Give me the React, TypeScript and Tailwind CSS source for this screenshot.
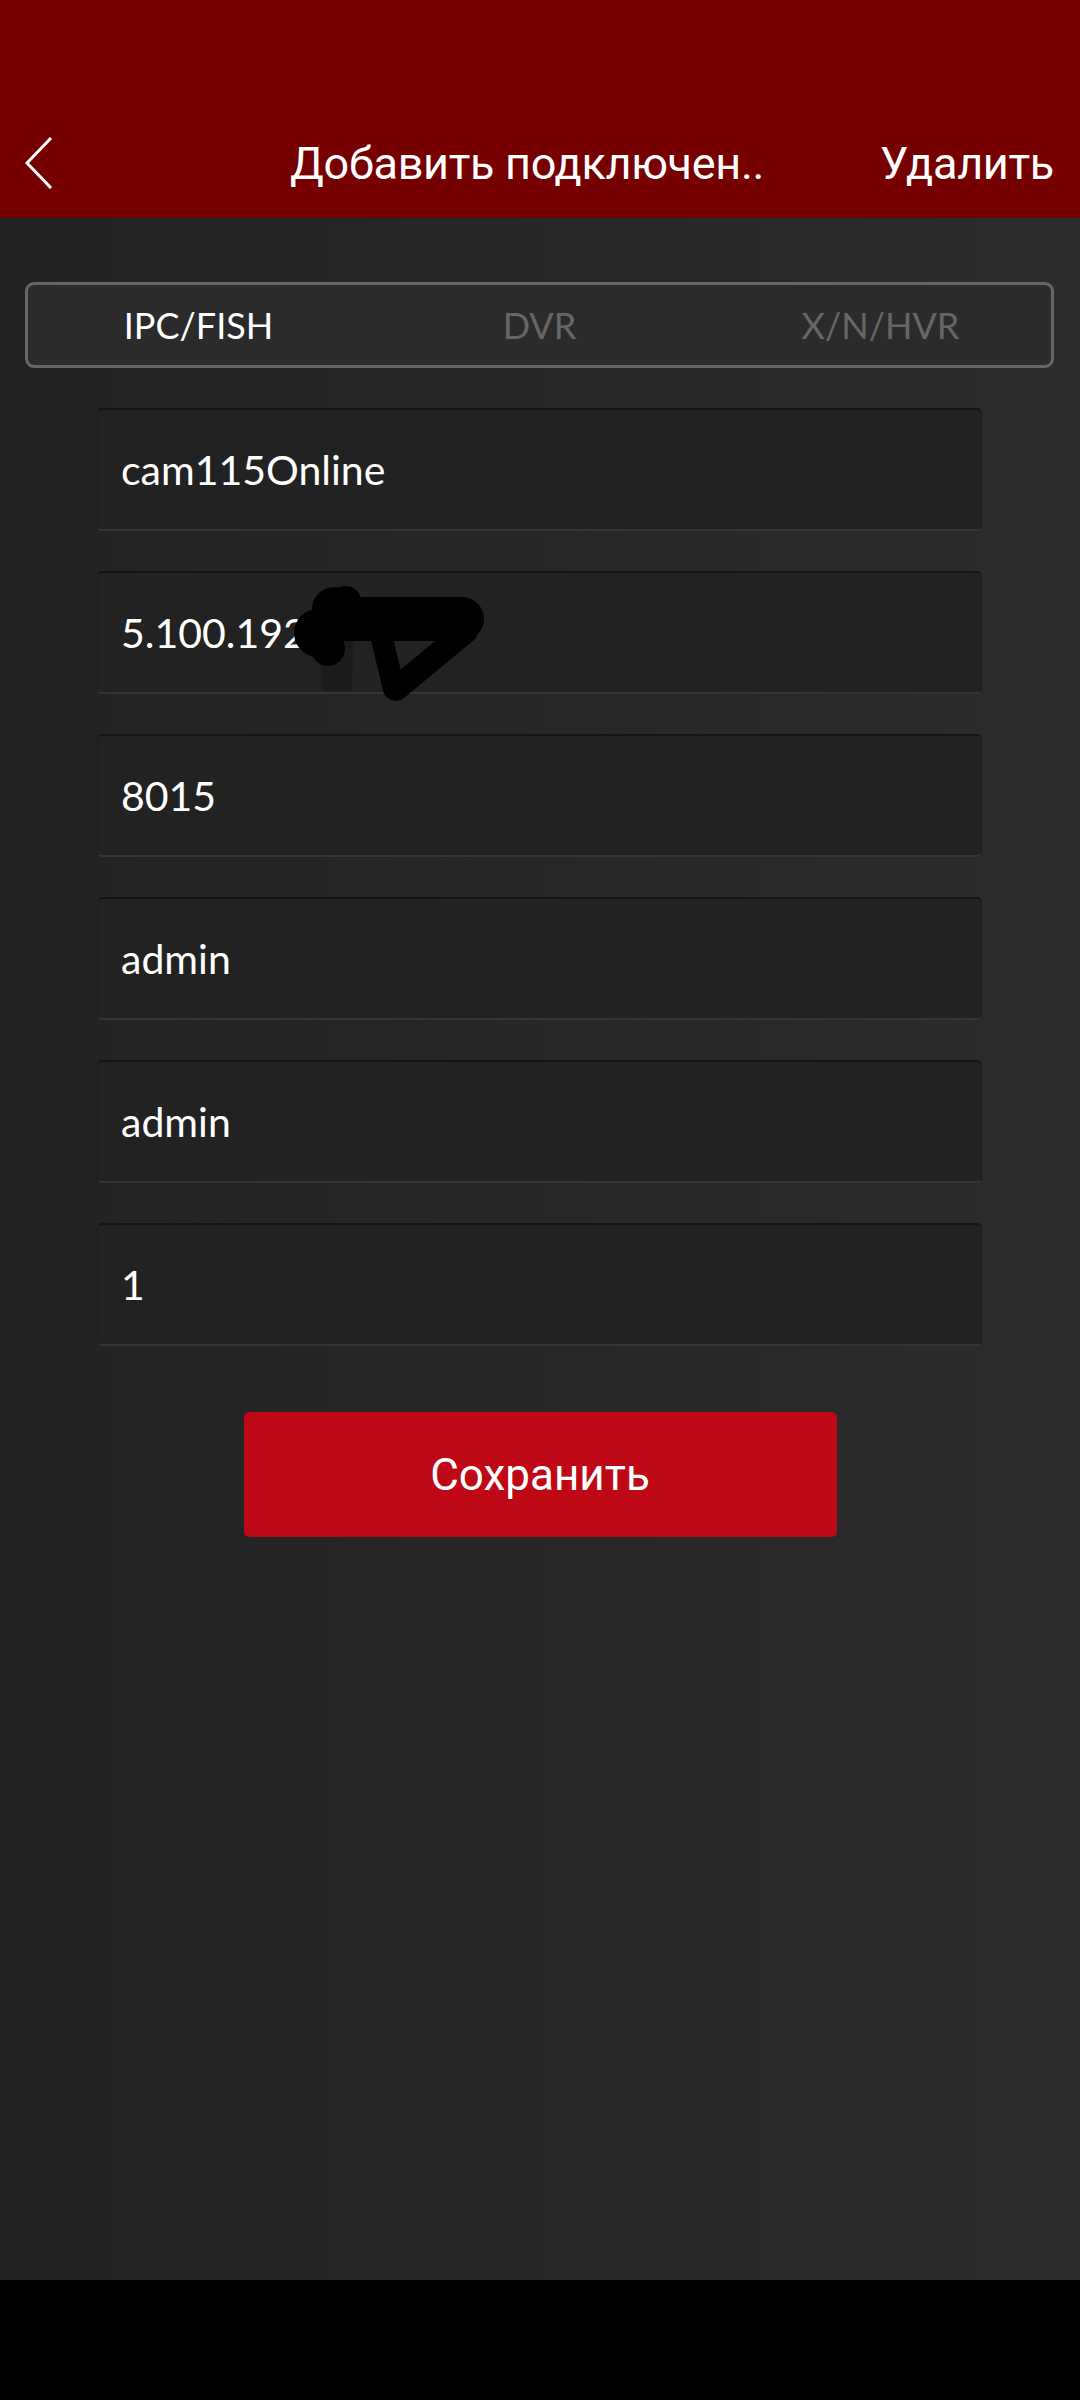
import * as React from 'react';

const fields = ['cam115Online', '5.100.192', '8015', 'admin', 'admin', '1'];

// redaction scribble over the ip address
const Scribble: React.FC = () => (
  <svg className="absolute left-[196px] top-[12px]" width="200" height="118" viewBox="0 0 200 118">
    <path d="M22 12 L60 10 L58 106 L28 106 Z" fill="#1b1b1b" />
    <g stroke="#000" strokeLinecap="round" strokeLinejoin="round" fill="none">
      <path d="M40 34 L168 34" strokeWidth="44" />
      <path d="M172 46 L102 104" strokeWidth="24" />
      <path d="M88 54 L100 104" strokeWidth="22" />
    </g>
    <circle cx="24" cy="48" r="24" fill="#000" />
    <circle cx="40" cy="24" r="22" fill="#000" />
    <circle cx="52" cy="16" r="15" fill="#000" />
    <circle cx="34" cy="64" r="17" fill="#000" />
  </svg>
);

const App: React.FC = () => {
  return (
    <div className="w-[1080px] h-[2400px] flex flex-col bg-black" style={{ fontFamily: 'Lato, "Open Sans", sans-serif' }}>
      {/* Header */}
      <div className="h-[218px] bg-[#760000] pt-[136px] shrink-0">
        <div className="h-[54px] flex items-center pl-[25px] pr-[26px] text-white text-[45px]" style={{ fontFamily: 'Roboto, "Noto Sans", sans-serif' }}>
          <svg width="28" height="52" viewBox="0 0 28 52" className="shrink-0">
            <path d="M26 1 L2 26 L26 51" stroke="#fff" strokeWidth="3" fill="none" />
          </svg>
          <span className="ml-[237px] leading-none tracking-[-0.3px]">Добавить подключен..</span>
          <span className="ml-auto leading-none tracking-[-0.3px]">Удалить</span>
        </div>
      </div>

      {/* Body */}
      <div className="h-[2062px] shrink-0 bg-gradient-to-r from-[#222222] to-[#2c2c2c] pt-[64px]">
        <div className="ml-[25px] mr-[26px] h-[86px] border-[3px] border-[#666666] rounded-[9px] bg-[#2b2b2b] grid grid-cols-3 items-center text-[36px]">
          <span className="text-center text-white">IPC/FISH</span>
          <span className="text-center text-[#666666]">DVR</span>
          <span className="text-center text-[#666666]">X/N/HVR</span>
        </div>

        <div className="mt-[40px] ml-[97px] mr-[98px] flex flex-col gap-[40px]">
          {fields.map((f, i) => (
            <div
              key={i}
              className="relative h-[123px] rounded-[5px] bg-[#222222] border-t-2 border-t-[#141414] border-b-2 border-b-[#353535] border-x border-x-[#1c1c1c] flex items-center pl-[23px] text-white text-[41px]"
            >
              {f}
              {i === 1 && <Scribble />}
            </div>
          ))}
        </div>

        <div className="mt-[66px] flex justify-center">
          <button
            className="w-[593px] h-[125px] rounded-[5px] bg-[#bf0816] text-white text-[44px]"
            style={{ fontFamily: 'Roboto, "Noto Sans", sans-serif' }}
          >
            Сохранить
          </button>
        </div>
      </div>

      {/* Navigation bar */}
      <div className="flex-1 bg-black" />
    </div>
  );
};

export default App;
